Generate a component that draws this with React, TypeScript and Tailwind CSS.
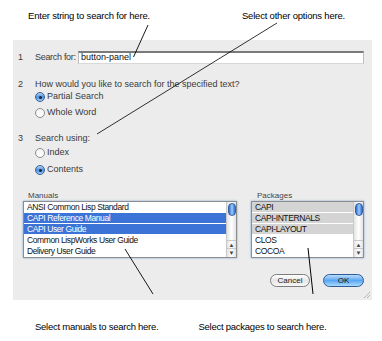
import React from "react";

const manuals = [
  { name: "ANSI Common Lisp Standard", sel: false },
  { name: "CAPI Reference Manual", sel: true },
  { name: "CAPI User Guide", sel: true },
  { name: "Common LispWorks User Guide", sel: false },
  { name: "Delivery User Guide", sel: false },
];

const packages = [
  { name: "CAPI", sel: true },
  { name: "CAPI-INTERNALS", sel: true },
  { name: "CAPI-LAYOUT", sel: true },
  { name: "CLOS", sel: false },
  { name: "COCOA", sel: false },
];

function Radio({ checked, label }: { checked: boolean; label: string }) {
  return (
    <div className="flex items-center h-[10px] gap-[2px]">
      {checked ? (
        <span className="w-[10px] h-[10px] rounded-full border border-[#3b5f95] bg-gradient-to-b from-[#b8d6f6] via-[#4a8ee0] to-[#9fd0fb] flex items-center justify-center">
          <span className="w-[3px] h-[3px] rounded-full bg-[#1c2733]" />
        </span>
      ) : (
        <span className="w-[10px] h-[10px] rounded-full border border-[#8c8c8c] bg-gradient-to-b from-[#f4f4f4] to-white" />
      )}
      <span>{label}</span>
    </div>
  );
}

function Scrollbar() {
  return (
    <div className="w-[10px] h-full bg-gradient-to-r from-[#e3e3e3] via-white to-[#e3e3e3] border-l border-[#c8c8c8] flex flex-col items-center">
      <div className="mt-[1px] w-[8px] h-[13px] rounded-full border border-[#35609b] bg-gradient-to-r from-[#2e6bd0] via-[#9dcbfa] to-[#2e6bd0]" />
      <div className="flex-1" />
      <div className="w-full h-[8px] flex items-center justify-center text-[6px] leading-none text-[#444] border-t border-[#c8c8c8]">
        ▲
      </div>
      <div className="w-full h-[8px] flex items-center justify-center text-[6px] leading-none text-[#444] border-t border-[#c8c8c8] mb-[1px]">
        ▼
      </div>
    </div>
  );
}

function ListBox({
  width,
  items,
  selClass,
  textSel,
}: {
  width: string;
  items: { name: string; sel: boolean }[];
  selClass: string;
  textSel: string;
}) {
  return (
    <div className={`${width} h-[57px] bg-white border border-[#8d8d8d] shadow-[0_0_2px_#7fa3d6] flex`}>
      <div className="flex-1 flex flex-col">
        {items.map((it, i) => (
          <div
            key={i}
            className={`h-[11px] flex items-center pl-[3px] tracking-[-0.4px] whitespace-nowrap border-b border-white ${
              it.sel ? `${selClass} ${textSel}` : "text-[#111]"
            }`}
          >
            {it.name}
          </div>
        ))}
      </div>
      <Scrollbar />
    </div>
  );
}

export default function App() {
  return (
    <div
      className="relative w-[382px] h-[341px] bg-white overflow-hidden"
      style={{ fontFamily: '"Liberation Sans", Arial, sans-serif' }}
    >
      <div className="h-[40px] flex items-start pt-[9px] text-[9.5px] tracking-[-0.2px] text-black whitespace-nowrap">
        <span className="ml-[28px]">Enter string to search for here.</span>
        <span className="ml-[92px]">Select other options here.</span>
      </div>

      <div className="ml-[13px] w-[359px] h-[260px] bg-[#ececec] relative text-[9px] text-[#3a3a3a]">
        <div className="pt-[11px] pr-[8px]">
          <div className="flex items-center h-[13px]">
            <span className="w-[22px] pl-[5px] shrink-0">1</span>
            <span className="w-[43px] shrink-0 whitespace-nowrap tracking-[-0.3px]">Search for:</span>
            <div className="flex-1 h-[13px] bg-white border-t-2 border-[#7a7a7a] border-x border-x-[#bdbdbd] border-b border-b-[#d8d8d8] flex items-center pl-[2px] text-[#111]">
              button-panel
            </div>
          </div>

          <div className="flex items-center h-[10px] mt-[16px] whitespace-nowrap">
            <span className="w-[22px] pl-[5px]">2</span>
            <span>How would you like to search for the specified text?</span>
          </div>
          <div className="ml-[22px] mt-[2px]">
            <Radio checked label="Partial Search" />
          </div>
          <div className="ml-[22px] mt-[6px]">
            <Radio checked={false} label="Whole Word" />
          </div>

          <div className="flex items-center h-[10px] mt-[16px]">
            <span className="w-[22px] pl-[5px]">3</span>
            <span>Search using:</span>
          </div>
          <div className="ml-[22px] mt-[4px]">
            <Radio checked={false} label="Index" />
          </div>
          <div className="ml-[22px] mt-[7px]">
            <Radio checked label="Contents" />
          </div>

          <div className="flex mt-[16px] ml-[10px] gap-[14px] text-[8.5px]">
            <div className="flex flex-col">
              <span className="h-[10px] leading-[10px] pl-[5px] text-[8px] text-[#444]">Manuals</span>
              <ListBox
                width="w-[214px]"
                items={manuals}
                selClass="bg-[#3b74d6]"
                textSel="text-white"
              />
            </div>
            <div className="flex flex-col">
              <span className="h-[10px] leading-[10px] pl-[6px] text-[8px] text-[#444]">Packages</span>
              <ListBox
                width="w-[113px]"
                items={packages}
                selClass="bg-[#d4d4d4]"
                textSel="text-[#111]"
              />
            </div>
          </div>

          <div className="flex justify-end mt-[16px] gap-[13px]">
            <div className="w-[40px] h-[13px] rounded-full border border-[#7d7d7d] bg-gradient-to-b from-white via-[#e6e6e6] to-[#f7f7f7] flex items-center justify-center text-[8px] text-[#222]">
              Cancel
            </div>
            <div className="w-[41px] h-[13px] rounded-full border border-[#2f5b99] bg-gradient-to-b from-[#b9dcfb] via-[#5aa6f0] to-[#a9dafd] flex items-center justify-center text-[8px] text-[#111]">
              OK
            </div>
          </div>
        </div>

        <svg className="absolute right-[2px] bottom-[2px]" width="7" height="7" viewBox="0 0 7 7">
          <line x1="1" y1="7" x2="7" y2="1" stroke="#a0a0a0" strokeWidth="0.7" />
          <line x1="4" y1="7" x2="7" y2="4" stroke="#a0a0a0" strokeWidth="0.7" />
        </svg>
      </div>

      <div className="h-[41px] flex items-start pt-[20px] text-[9.5px] tracking-[-0.25px] text-black whitespace-nowrap">
        <span className="ml-[35px]">Select manuals to search here.</span>
        <span className="ml-[40px]">Select packages to search here.</span>
      </div>

      <svg className="absolute inset-0 pointer-events-none" width="382" height="341">
        <line x1="148" y1="25" x2="133.5" y2="57" stroke="#000" strokeWidth="0.9" />
        <line x1="277" y1="23" x2="97" y2="134" stroke="#000" strokeWidth="0.8" />
        <line x1="125" y1="249" x2="153" y2="294" stroke="#000" strokeWidth="0.9" />
        <line x1="308" y1="248" x2="313" y2="294" stroke="#000" strokeWidth="1" />
      </svg>
    </div>
  );
}
